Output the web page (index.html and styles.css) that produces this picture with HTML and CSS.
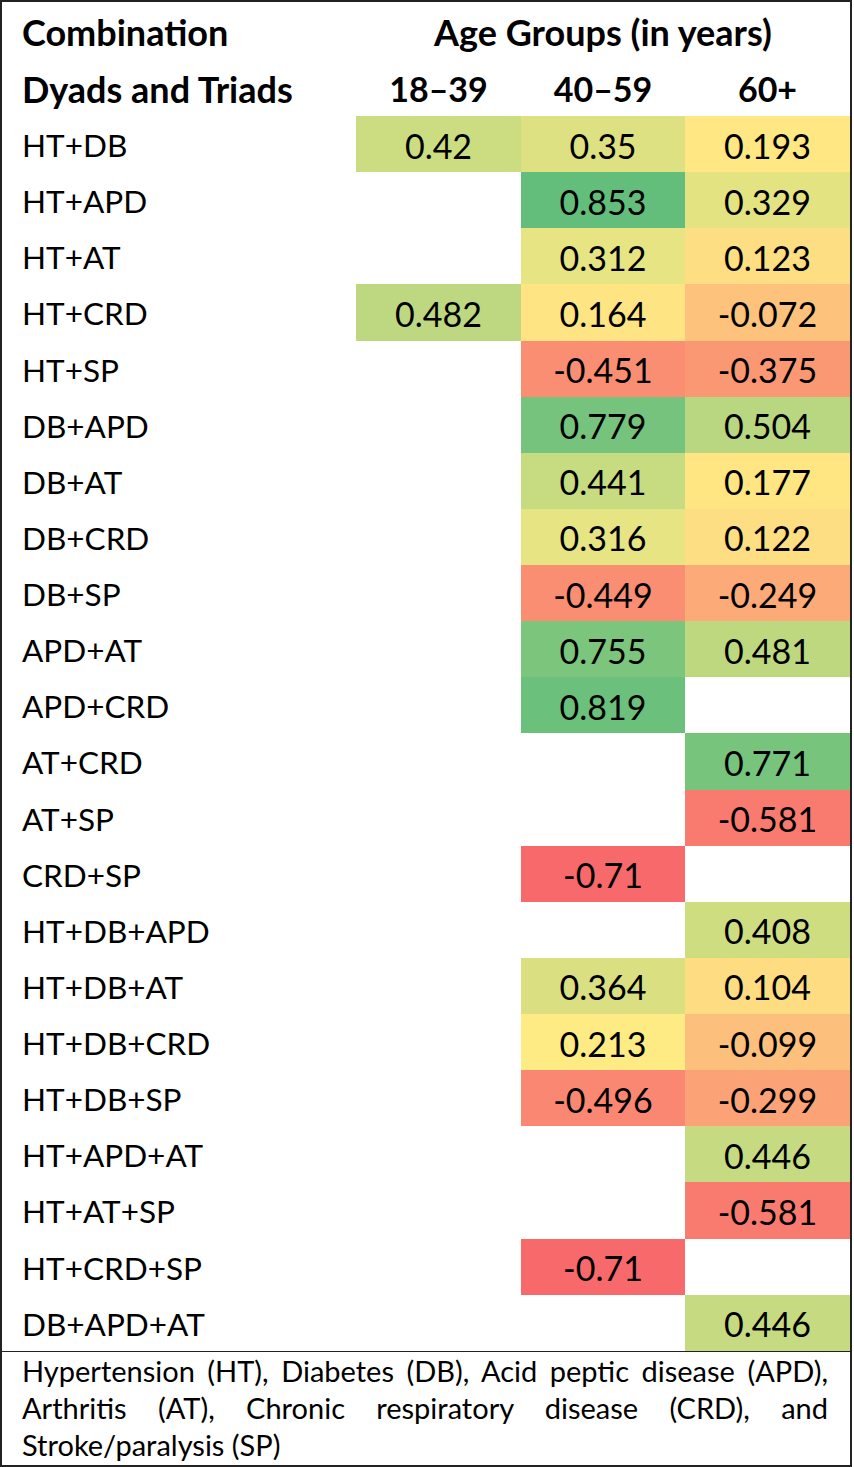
FILE: index.html
```html
<!DOCTYPE html>
<html lang="en">
<head>
<meta charset="utf-8">
<title>Combination Dyads and Triads by Age Group</title>
<link rel="stylesheet" href="styles.css">
</head>
<body>
<div class="table">
  <div class="grid">
    <div class="cell label head">Combination</div>
    <div class="cell group head">Age Groups (in years)</div>

    <div class="cell label head">Dyads and Triads</div>
    <div class="cell num head-num">18–39</div>
    <div class="cell num head-num">40–59</div>
    <div class="cell num head-num">60+</div>

    <div class="cell label">HT+DB</div>
    <div class="cell num" style="background:#CCDC81">0.42</div>
    <div class="cell num" style="background:#DEE182">0.35</div>
    <div class="cell num" style="background:#FFE884">0.193</div>

    <div class="cell label">HT+APD</div>
    <div class="cell num"></div>
    <div class="cell num" style="background:#63BE7B">0.853</div>
    <div class="cell num" style="background:#E3E382">0.329</div>

    <div class="cell label">HT+AT</div>
    <div class="cell num"></div>
    <div class="cell num" style="background:#E7E483">0.312</div>
    <div class="cell num" style="background:#FEDE82">0.123</div>

    <div class="cell label">HT+CRD</div>
    <div class="cell num" style="background:#BDD880">0.482</div>
    <div class="cell num" style="background:#FFE483">0.164</div>
    <div class="cell num" style="background:#FDC37C">-0.072</div>

    <div class="cell label">HT+SP</div>
    <div class="cell num"></div>
    <div class="cell num" style="background:#FA8E72">-0.451</div>
    <div class="cell num" style="background:#FB9874">-0.375</div>

    <div class="cell label">DB+APD</div>
    <div class="cell num"></div>
    <div class="cell num" style="background:#75C37C">0.779</div>
    <div class="cell num" style="background:#B8D780">0.504</div>

    <div class="cell label">DB+AT</div>
    <div class="cell num"></div>
    <div class="cell num" style="background:#C7DB81">0.441</div>
    <div class="cell num" style="background:#FFE683">0.177</div>

    <div class="cell label">DB+CRD</div>
    <div class="cell num"></div>
    <div class="cell num" style="background:#E6E483">0.316</div>
    <div class="cell num" style="background:#FEDE82">0.122</div>

    <div class="cell label">DB+SP</div>
    <div class="cell num"></div>
    <div class="cell num" style="background:#FA8E72">-0.449</div>
    <div class="cell num" style="background:#FCAA78">-0.249</div>

    <div class="cell label">APD+AT</div>
    <div class="cell num"></div>
    <div class="cell num" style="background:#7BC57C">0.755</div>
    <div class="cell num" style="background:#BED880">0.481</div>

    <div class="cell label">APD+CRD</div>
    <div class="cell num"></div>
    <div class="cell num" style="background:#6BC07C">0.819</div>
    <div class="cell num"></div>

    <div class="cell label">AT+CRD</div>
    <div class="cell num"></div>
    <div class="cell num"></div>
    <div class="cell num" style="background:#77C47C">0.771</div>

    <div class="cell label">AT+SP</div>
    <div class="cell num"></div>
    <div class="cell num"></div>
    <div class="cell num" style="background:#F97B6F">-0.581</div>

    <div class="cell label">CRD+SP</div>
    <div class="cell num"></div>
    <div class="cell num" style="background:#F8696B">-0.71</div>
    <div class="cell num"></div>

    <div class="cell label">HT+DB+APD</div>
    <div class="cell num"></div>
    <div class="cell num"></div>
    <div class="cell num" style="background:#CFDD81">0.408</div>

    <div class="cell label">HT+DB+AT</div>
    <div class="cell num"></div>
    <div class="cell num" style="background:#DAE082">0.364</div>
    <div class="cell num" style="background:#FEDC81">0.104</div>

    <div class="cell label">HT+DB+CRD</div>
    <div class="cell num"></div>
    <div class="cell num" style="background:#FFEB84">0.213</div>
    <div class="cell num" style="background:#FDBF7C">-0.099</div>

    <div class="cell label">HT+DB+SP</div>
    <div class="cell num"></div>
    <div class="cell num" style="background:#FA8771">-0.496</div>
    <div class="cell num" style="background:#FBA376">-0.299</div>

    <div class="cell label">HT+APD+AT</div>
    <div class="cell num"></div>
    <div class="cell num"></div>
    <div class="cell num" style="background:#C6DB81">0.446</div>

    <div class="cell label">HT+AT+SP</div>
    <div class="cell num"></div>
    <div class="cell num"></div>
    <div class="cell num" style="background:#F97B6F">-0.581</div>

    <div class="cell label">HT+CRD+SP</div>
    <div class="cell num"></div>
    <div class="cell num" style="background:#F8696B">-0.71</div>
    <div class="cell num"></div>

    <div class="cell label">DB+APD+AT</div>
    <div class="cell num"></div>
    <div class="cell num"></div>
    <div class="cell num" style="background:#C6DB81">0.446</div>
  </div>
  <div class="note">
    <div class="note-line just">Hypertension (HT), Diabetes (DB), Acid peptic disease (APD),</div>
    <div class="note-line just">Arthritis (AT), Chronic respiratory disease (CRD), and</div>
    <div class="note-line">Stroke/paralysis (SP)</div>
  </div>
</div>
</body>
</html>
```

FILE: styles.css
```css
* { box-sizing: border-box; }

html, body {
  margin: 0;
  padding: 0;
  background: #ffffff;
}

body {
  font-family: Lato, "Open Sans", "Liberation Sans", sans-serif;
  color: #000;
}

.table {
  width: 852px;
  height: 1467px;
  border: 2px solid #222;
  display: flex;
  flex-direction: column;
}

.grid {
  display: grid;
  grid-template-columns: 354px 165px 164px 165px;
  grid-template-rows: 57px 57px repeat(22, 56.136px);
  border-bottom: 1px solid #222;
}

.cell {
  display: flex;
  align-items: center;
  padding-top: 2px;
  font-size: 34px;
  white-space: nowrap;
}

.label {
  padding-left: 20px;
  font-size: 31.5px;
}

.head {
  font-size: 36px;
  font-weight: 700;
}

.head-num {
  font-size: 34px;
  font-weight: 700;
}

.group {
  grid-column: 2 / span 3;
  justify-content: center;
}

.num {
  justify-content: center;
}

.note {
  flex: 1;
  padding: 0 22px 0 20px;
  font-size: 29px;
  line-height: 37px;
}

.note-line {
  white-space: nowrap;
}

.note-line.just {
  text-align: justify;
  text-align-last: justify;
}
```
